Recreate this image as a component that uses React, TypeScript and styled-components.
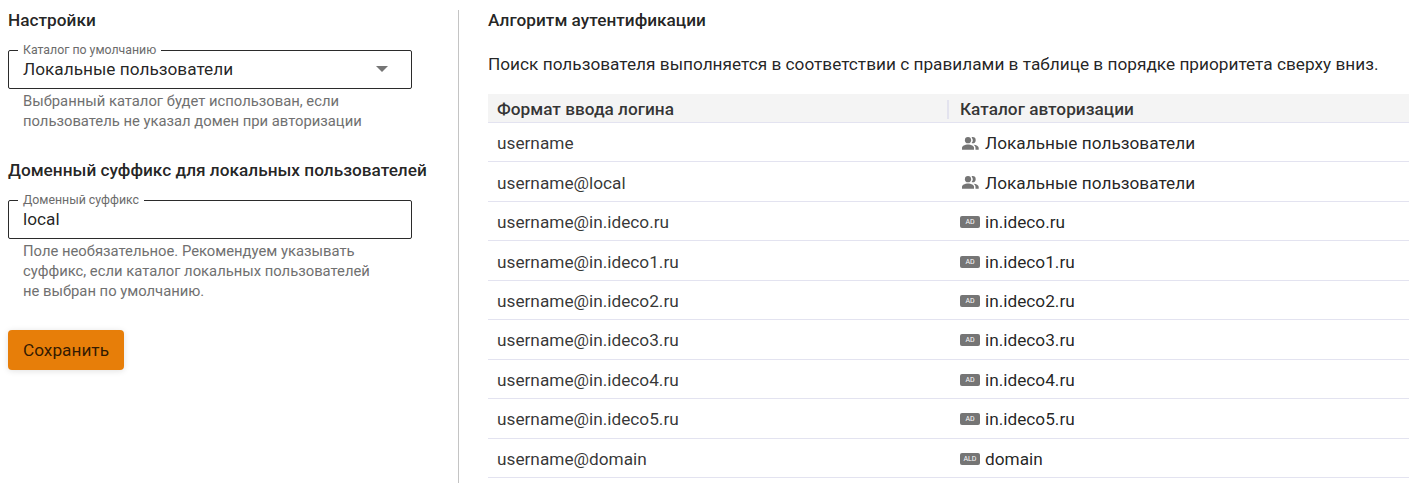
import React from "react";
import styled, { createGlobalStyle } from "styled-components";

const GlobalStyle = createGlobalStyle`
  *, *::before, *::after { box-sizing: border-box; }
  body {
    margin: 0;
    background: #fff;
    color: rgba(0, 0, 0, 0.87);
    font-family: Roboto, "Liberation Sans", sans-serif;
    overflow: hidden;
  }
`;

const Page = styled.main`
  display: flex;
  height: 483px;
  padding-top: 10px;
  overflow: hidden;
`;

const Settings = styled.section`
  flex: 0 0 458px;
  padding-left: 8px;
`;

const Algorithm = styled.section`
  flex: 1;
  min-width: 0;
  padding-left: 29px;
  border-left: 1px solid #c4c4c4;
`;

const Heading = styled.h2`
  margin: 0;
  font-size: 17.24px;
  font-weight: 500;
  line-height: 20px;
  white-space: nowrap;
`;

const Field = styled.fieldset`
  display: flex;
  align-items: center;
  justify-content: space-between;
  width: 404px;
  height: 47px;
  margin: 12px 0 0;
  padding: 0 23px 8px 14px;
  border: 1px solid #2b2b2b;
  border-radius: 2px;
  font-size: 17.24px;
  line-height: 20px;
`;

const Legend = styled.legend`
  margin-left: -5px;
  padding: 0 5px;
  color: #6b6b6b;
  font-size: 12.32px;
  line-height: 16px;
`;

const Arrow = styled.svg`
  width: 12px;
  height: 6px;
  fill: #757575;
`;

const Hint = styled.p`
  width: 380px;
  margin: 3px 0 0 15px;
  color: #707070;
  font-size: 14.8px;
  line-height: 19.7px;
  white-space: pre-line;
`;

const Section = styled.div<{ $gap?: number }>`
  margin-top: ${(p) => p.$gap ?? 0}px;
`;

const SaveButton = styled.button`
  display: block;
  width: 116px;
  height: 40px;
  margin-top: 28px;
  padding: 0;
  border: 0;
  border-radius: 4px;
  background: #e77e09;
  box-shadow: 0 1px 6px rgba(0, 0, 0, 0.12);
  color: rgba(0, 0, 0, 0.8);
  font: 400 17.24px/20px Roboto, sans-serif;
`;

const Description = styled.p`
  margin: 24px 0 19px;
  font-size: 17.24px;
  line-height: 21px;
  white-space: nowrap;
`;

const Row = styled.div`
  display: grid;
  grid-template-columns: 460px 1fr;
  align-items: center;
  height: 39.44px;
  padding-top: 2px;
  border-bottom: 1px solid #e3e3f0;
  font-size: 17.24px;
  line-height: 20px;
`;

const HeaderRow = styled(Row)`
  height: 29px;
  background: #f4f4f4;
  font-weight: 500;
`;

const Cell = styled.div`
  display: flex;
  align-items: center;
  padding-left: 9px;
  color: rgba(0, 0, 0, 0.8);
`;

const CatalogCell = styled(Cell)`
  padding-left: 12px;
  color: rgba(0, 0, 0, 0.87);
`;

const DividedCell = styled(Cell)`
  height: 19px;
  margin-left: -1px;
  padding-left: 11px;
  border-left: 2px solid #e3e3ee;
`;

const IconSlot = styled.span`
  display: flex;
  justify-content: center;
  width: 20px;
  margin-right: 5px;
`;

const People = styled.svg`
  width: 17px;
  height: 13px;
  fill: #757575;
`;

const Tag = styled.span`
  width: 20px;
  height: 12px;
  border-radius: 2px;
  background: #757575;
  color: #fff;
  font-size: 7px;
  font-weight: 400;
  line-height: 13px;
  text-align: center;
`;

type Kind = "local" | "AD" | "ALD";

const rows: { login: string; catalog: string; kind: Kind }[] = [
  { login: "username", catalog: "Локальные пользователи", kind: "local" },
  { login: "username@local", catalog: "Локальные пользователи", kind: "local" },
  { login: "username@in.ideco.ru", catalog: "in.ideco.ru", kind: "AD" },
  { login: "username@in.ideco1.ru", catalog: "in.ideco1.ru", kind: "AD" },
  { login: "username@in.ideco2.ru", catalog: "in.ideco2.ru", kind: "AD" },
  { login: "username@in.ideco3.ru", catalog: "in.ideco3.ru", kind: "AD" },
  { login: "username@in.ideco4.ru", catalog: "in.ideco4.ru", kind: "AD" },
  { login: "username@in.ideco5.ru", catalog: "in.ideco5.ru", kind: "AD" },
  { login: "username@domain", catalog: "domain", kind: "ALD" },
];

function CatalogIcon({ kind }: { kind: Kind }) {
  return (
    <IconSlot>
      {kind === "local" ? (
        <People viewBox="0 0 17 13">
          <circle cx="6" cy="3.2" r="3.1" />
          <path d="M9.6.4c.3-.2.600-.3 1-.3a3.100 3.100 0 0 1 0 6.200c-.4 0-.7-.1-1-.3a4.300 4.300 0 0 0 0-5.600z" />
          <path d="M0 12.800v-2C0 8.900 3.300 7.600 6 7.600s6 1.300 6 3.200v2z" />
          <path d="M11.600 7.700c2.700.3 5.100 1.400 5.100 3.100v2h-3.200v-2c0-1.300-.8-2.300-1.900-3.100z" />
        </People>
      ) : (
        <Tag>{kind}</Tag>
      )}
    </IconSlot>
  );
}

export default function App() {
  return (
    <>
      <GlobalStyle />
      <Page>
        <Settings>
          <Heading>Настройки</Heading>
          <Field>
            <Legend>Каталог по умолчанию</Legend>
            <span>Локальные пользователи</span>
            <Arrow viewBox="0 0 12 6">
              <path d="M0 0h12L6 6z" />
            </Arrow>
          </Field>
          <Hint>{"Выбранный каталог будет использован, если\nпользователь не указал домен при авторизации"}</Hint>
          <Section $gap={29}>
            <Heading>Доменный суффикс для локальных пользователей</Heading>
            <Field>
              <Legend>Доменный суффикс</Legend>
              <span>local</span>
            </Field>
            <Hint>{"Поле необязательное. Рекомендуем указывать\nсуффикс, если каталог локальных пользователей\nне выбран по умолчанию."}</Hint>
          </Section>
          <SaveButton type="button">Сохранить</SaveButton>
        </Settings>
        <Algorithm>
          <Heading>Алгоритм аутентификации</Heading>
          <Description>
            Поиск пользователя выполняется в соответствии с правилами в таблице в порядке приоритета сверху вниз.
          </Description>
          <HeaderRow>
            <Cell>Формат ввода логина</Cell>
            <DividedCell>Каталог авторизации</DividedCell>
          </HeaderRow>
          {rows.map((row) => (
            <Row key={row.login}>
              <Cell>{row.login}</Cell>
              <CatalogCell>
                <CatalogIcon kind={row.kind} />
                {row.catalog}
              </CatalogCell>
            </Row>
          ))}
        </Algorithm>
      </Page>
    </>
  );
}
